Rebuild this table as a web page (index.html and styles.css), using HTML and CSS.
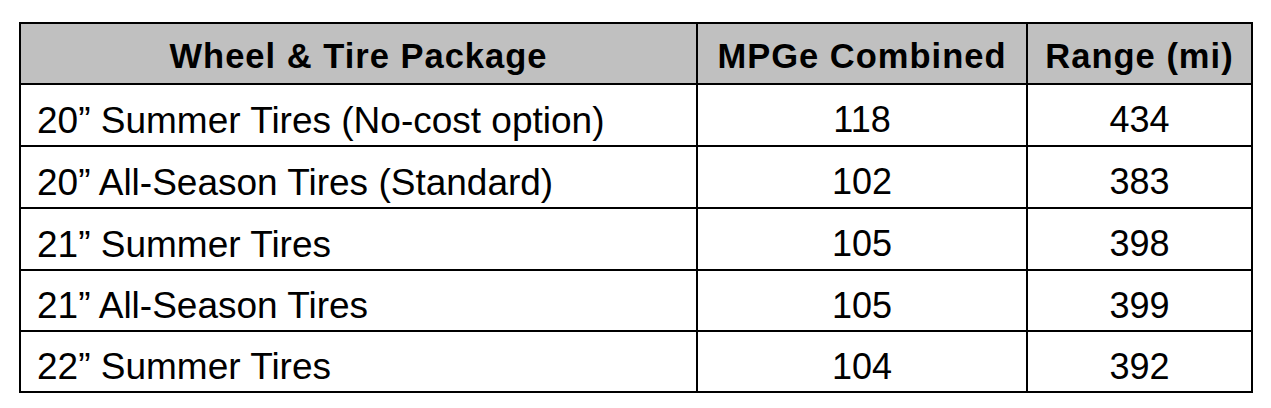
FILE: index.html
```html
<!DOCTYPE html>
<html lang="en">
<head>
<meta charset="utf-8">
<title>Wheel &amp; Tire Package</title>
<link rel="stylesheet" href="styles.css">
</head>
<body>
<div class="table" role="table">
  <div class="cell head name" role="columnheader">Wheel &amp; Tire Package</div>
  <div class="cell head" role="columnheader">MPGe Combined</div>
  <div class="cell head" role="columnheader">Range (mi)</div>

  <div class="cell name">20” Summer Tires (No-cost option)</div>
  <div class="cell num">118</div>
  <div class="cell num">434</div>

  <div class="cell name">20” All-Season Tires (Standard)</div>
  <div class="cell num">102</div>
  <div class="cell num">383</div>

  <div class="cell name">21” Summer Tires</div>
  <div class="cell num">105</div>
  <div class="cell num">398</div>

  <div class="cell name">21” All-Season Tires</div>
  <div class="cell num">105</div>
  <div class="cell num">399</div>

  <div class="cell name">22” Summer Tires</div>
  <div class="cell num">104</div>
  <div class="cell num">392</div>
</div>
</body>
</html>
```
FILE: styles.css
```css
html, body {
  margin: 0;
  padding: 0;
  background: #ffffff;
}

body {
  font-family: "Liberation Sans", Arial, Helvetica, sans-serif;
  color: #000000;
  padding: 22px 0 0 19px;
}

.table {
  display: grid;
  grid-template-columns: 677px 330px 225px;
  grid-template-rows: 61px 62px 62px 62px 61px 61px;
  width: 1234px;
  box-sizing: border-box;
  border-top: 2px solid #000;
  border-left: 2px solid #000;
}

.cell {
  box-sizing: border-box;
  border-right: 2px solid #000;
  border-bottom: 2px solid #000;
  display: flex;
  align-items: center;
  justify-content: center;
  padding-top: 10px;
  font-size: 37px;
  line-height: 1;
  white-space: nowrap;
}

.cell.name {
  justify-content: flex-start;
  padding-left: 16px;
}

.cell.num {
  font-size: 36px;
}

.cell.head {
  background: #c0c0c0;
  font-weight: bold;
  font-size: 34.5px;
  letter-spacing: 1px;
  justify-content: center;
  padding-left: 0;
  padding-top: 6px;
}
```
